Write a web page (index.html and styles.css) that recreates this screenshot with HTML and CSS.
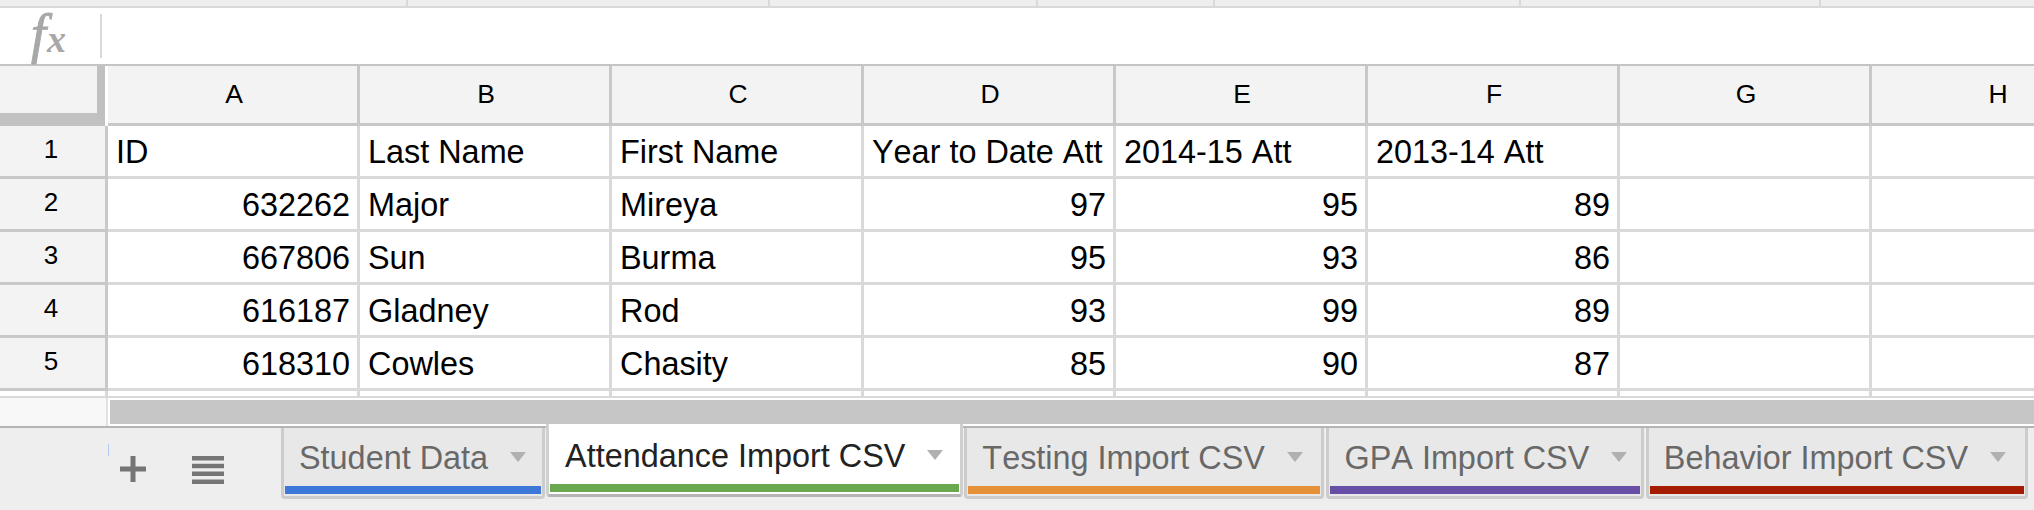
FILE: index.html
```html
<!DOCTYPE html>
<html lang="en">

<head>
  <meta charset="UTF-8">
  <meta name="viewport" content="width=device-width, initial-scale=1.0">
  <title>Attendance Import CSV</title>
  <link rel="stylesheet" href="styles.css">
</head>

<body>
  <div class="toolbar-strip">
    <span class="strip-seg seg-1"></span>
    <span class="strip-seg seg-2"></span>
    <span class="strip-seg seg-3"></span>
    <span class="strip-seg seg-4"></span>
    <span class="strip-seg seg-5"></span>
    <span class="strip-seg seg-6"></span>
  </div>

  <div class="formula-bar">
    <span class="fx">f<span class="fx-x">x</span></span>
    <span class="fx-divider"></span>
  </div>

  <div class="sheet">
    <div class="row header-row">
      <div class="corner"></div>
      <div class="col-head">A</div>
      <div class="col-head">B</div>
      <div class="col-head">C</div>
      <div class="col-head">D</div>
      <div class="col-head">E</div>
      <div class="col-head">F</div>
      <div class="col-head">G</div>
      <div class="col-head">H</div>
    </div>
    <div class="row">
      <div class="row-head">1</div>
      <div class="cell">ID</div>
      <div class="cell">Last Name</div>
      <div class="cell">First Name</div>
      <div class="cell">Year to Date Att</div>
      <div class="cell">2014-15 Att</div>
      <div class="cell">2013-14 Att</div>
      <div class="cell"></div>
      <div class="cell"></div>
    </div>
    <div class="row">
      <div class="row-head">2</div>
      <div class="cell num">632262</div>
      <div class="cell">Major</div>
      <div class="cell">Mireya</div>
      <div class="cell num">97</div>
      <div class="cell num">95</div>
      <div class="cell num">89</div>
      <div class="cell"></div>
      <div class="cell"></div>
    </div>
    <div class="row">
      <div class="row-head">3</div>
      <div class="cell num">667806</div>
      <div class="cell">Sun</div>
      <div class="cell">Burma</div>
      <div class="cell num">95</div>
      <div class="cell num">93</div>
      <div class="cell num">86</div>
      <div class="cell"></div>
      <div class="cell"></div>
    </div>
    <div class="row">
      <div class="row-head">4</div>
      <div class="cell num">616187</div>
      <div class="cell">Gladney</div>
      <div class="cell">Rod</div>
      <div class="cell num">93</div>
      <div class="cell num">99</div>
      <div class="cell num">89</div>
      <div class="cell"></div>
      <div class="cell"></div>
    </div>
    <div class="row">
      <div class="row-head">5</div>
      <div class="cell num">618310</div>
      <div class="cell">Cowles</div>
      <div class="cell">Chasity</div>
      <div class="cell num">85</div>
      <div class="cell num">90</div>
      <div class="cell num">87</div>
      <div class="cell"></div>
      <div class="cell"></div>
    </div>
    <div class="row partial-row">
      <div class="row-head"></div>
      <div class="cell"></div>
      <div class="cell"></div>
      <div class="cell"></div>
      <div class="cell"></div>
      <div class="cell"></div>
      <div class="cell"></div>
      <div class="cell"></div>
      <div class="cell"></div>
    </div>
  </div>

  <div class="scroll-row">
    <div class="scroll-corner"></div>
    <div class="scroll-thumb"></div>
  </div>

  <div class="tab-bar">
    <span class="tab-cursor"></span>
    <svg class="add-icon" width="26" height="26" viewBox="0 0 26 26">
      <path d="M0 10.500h10.500v-10.500h5v10.500h10.500v5h-10.500v10.500h-5v-10.500h-10.500z" fill="#757575"></path>
    </svg>
    <svg class="menu-icon" width="32" height="28" viewBox="0 0 32 28">
      <path d="M0 0h32v4.500h-32zM0 7.800h32v4.500h-32zM0 15.600h32v4.500h-32zM0 23.400h32v4.500h-32z" fill="#757575"></path>
    </svg>
    <div class="tab tab-blue">
      <div class="tab-label"><span>Student Data</span><i class="tab-arrow"></i></div>
      <div class="tab-color"></div>
    </div>
    <div class="tab tab-active tab-green">
      <div class="tab-label"><span>Attendance Import CSV</span><i class="tab-arrow"></i></div>
      <div class="tab-color"></div>
    </div>
    <div class="tab tab-orange">
      <div class="tab-label"><span>Testing Import CSV</span><i class="tab-arrow"></i></div>
      <div class="tab-color"></div>
    </div>
    <div class="tab tab-purple">
      <div class="tab-label"><span>GPA Import CSV</span><i class="tab-arrow"></i></div>
      <div class="tab-color"></div>
    </div>
    <div class="tab tab-red">
      <div class="tab-label"><span>Behavior Import CSV</span><i class="tab-arrow"></i></div>
      <div class="tab-color"></div>
    </div>
  </div>
</body>

</html>
```

FILE: styles.css
```css
body {
  font-family: "Liberation Sans", Arial, sans-serif;
  font-kerning: none;
  margin: 0;
  height: 510px;
  overflow: hidden;
  background: #eeeeee;
  color: #000;
}

.toolbar-strip {
  display: flex;
  height: 6px;
  background: #eeeeee;
  border-bottom: 2px solid #d9d9d9;
}

.strip-seg {
  box-sizing: border-box;
  border-right: 2px solid #d9d9d9;
}

.seg-1 { width: 408px; }
.seg-2 { width: 362px; }
.seg-3 { width: 268px; }
.seg-4 { width: 177px; }
.seg-5 { width: 306px; }
.seg-6 { width: 300px; }

.formula-bar {
  display: flex;
  align-items: center;
  height: 56px;
  background: white;
  border-bottom: 2px solid #c4c4c4;
}

.fx {
  width: 100px;
  padding-left: 31px;
  box-sizing: border-box;
  font-family: "Liberation Serif", serif;
  font-style: italic;
  font-size: 54px;
  line-height: 56px;
  color: #a8a8a8;
  -webkit-text-stroke: 1px #a8a8a8;
}

.fx-x {
  margin-left: 1px;
  font-size: 38px;
  font-weight: bold;
  -webkit-text-stroke: 0;
}

.fx-divider {
  width: 2px;
  height: 44px;
  background: #d9d9d9;
}

.sheet {
  overflow: hidden;
}

.row {
  display: flex;
  height: 53px;
}

.header-row {
  height: 60px;
  background: white;
}

.partial-row {
  height: 7px;
}

.corner,
.row-head {
  box-sizing: border-box;
  background: #f3f3f3;
}

.corner {
  flex: 0 0 105px;
  margin-right: 3px;
  border-right: 8px solid #c0c0c0;
  border-bottom: 13px solid #c2c2c2;
}

.row-head {
  flex: 0 0 108px;
  padding-right: 3px;
  font-size: 26px;
  line-height: 47px;
  text-align: center;
  border-right: 3px solid #c8c8c8;
  border-bottom: 3px solid #c8c8c8;
}

.col-head,
.cell {
  flex: 0 0 252px;
  box-sizing: border-box;
}

.col-head {
  padding-left: 3px;
  font-size: 26.5px;
  line-height: 57px;
  text-align: center;
  background: #f3f3f3;
  border-right: 3px solid #c8c8c8;
  border-bottom: 3px solid #c8c8c8;
}

.cell {
  padding: 0 7px 0 8px;
  font-size: 32.4px;
  line-height: 53px;
  white-space: nowrap;
  background: white;
  border-right: 3px solid #d9d9d9;
  border-bottom: 3px solid #d9d9d9;
}

.num {
  text-align: right;
}

.partial-row .row-head,
.partial-row .cell {
  border-bottom-width: 2px;
  border-bottom-color: #d9d9d9;
}

.partial-row .row-head {
  background: white;
  border-right-color: #d9d9d9;
}

.scroll-row {
  display: flex;
  height: 28px;
  background: white;
  border-bottom: 2px solid #b5b5b5;
}

.scroll-corner {
  flex: 0 0 108px;
  box-sizing: border-box;
  background: #f8f8f8;
  border-right: 2px solid #e2e2e2;
}

.scroll-thumb {
  flex: 1;
  height: 24px;
  margin: 2px 0 0 2px;
  background: #c6c6c6;
}

.tab-bar {
  display: flex;
  align-items: flex-start;
  height: 82px;
  background: #eeeeee;
}

.tab-cursor {
  width: 1px;
  height: 12px;
  margin: 16px 0 0 108px;
  background: #b4c8f0;
}

.add-icon {
  margin: 28px 0 0 11px;
  filter: blur(0.4px);
}

.menu-icon {
  margin: 28px 57px 0 46px;
  filter: blur(0.4px);
}

.tab {
  box-sizing: border-box;
  height: 71px;
  margin-right: 2px;
  color: #686868;
  background: #e8e8e8;
  border: 3px solid #cccccc;
  border-top: none;
  border-radius: 0 0 4px 4px;
}

.tab-label {
  display: flex;
  align-items: center;
  box-sizing: border-box;
  height: 58px;
  padding: 3px 16px 0 15px;
  font-size: 32.4px;
  white-space: nowrap;
}

.tab-arrow {
  width: 0;
  height: 0;
  margin: -4px 0 0 22px;
  border-left: 8.5px solid transparent;
  border-right: 8.5px solid transparent;
  border-top: 10px solid #b0b0b0;
}

.tab-color {
  height: 8px;
  margin: 0 1px;
}

.tab-active {
  height: 73px;
  margin: -4px 1px 0 -1px;
  color: #222;
  background: white;
  border-color: #b5b5b5;
  border-top: none;
  border-left-color: #d0d0d0;
  border-right-color: #d0d0d0;
}

.tab-active .tab-label {
  height: 60px;
  padding: 5px 17px 0 16px;
}

.tab-orange .tab-label,
.tab-red .tab-label {
  padding-right: 18.5px;
}

.tab-purple .tab-label {
  padding-right: 13.5px;
}

.tab-blue .tab-color {
  background: #3c78d8;
}

.tab-green .tab-color {
  background: #6aa84f;
}

.tab-orange .tab-color {
  background: #e69138;
}

.tab-purple .tab-color {
  background: #674ea7;
}

.tab-red .tab-color {
  background: #a61c00;
}
```
